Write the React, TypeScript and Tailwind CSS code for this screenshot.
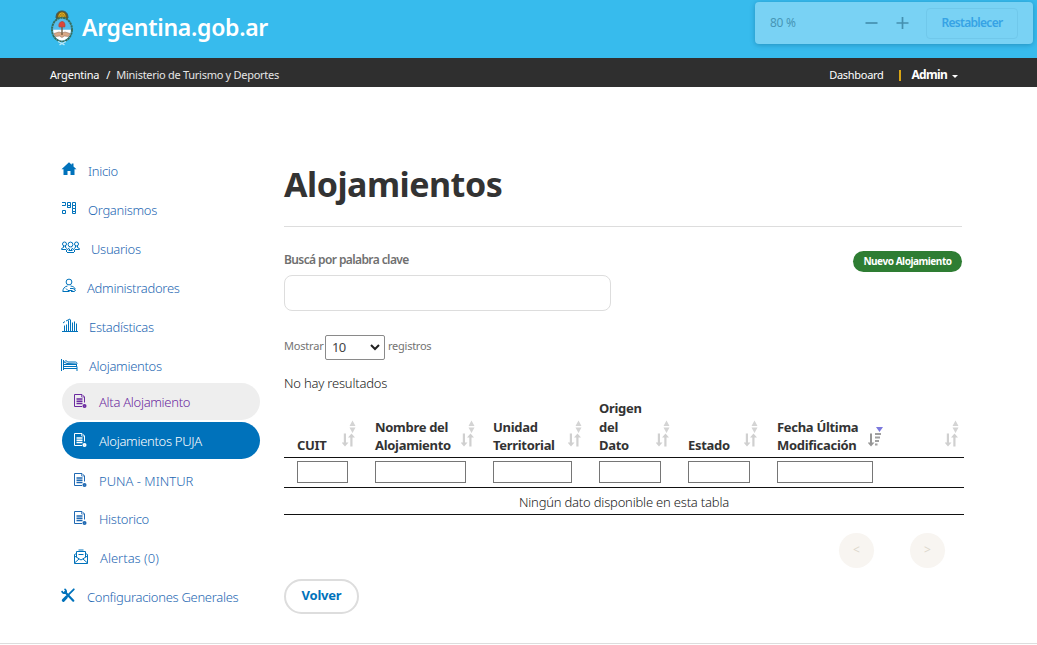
import type { ReactNode } from "react";

function Seal() {
  return (
    <svg width="24" height="36" viewBox="0 0 24 36" fill="none">
      <path d="M6 8C6 3 8.500 1 12 1s6 2 6 7l-2 1.500H8z" fill="#6b5a20" stroke="#3d5961" strokeWidth="1" />
      <path d="M8.500 7.500C8 4 10 2.500 12 2.500s4 1.500 3.500 5z" fill="#e8b323" />
      <path d="M9.500 7l1-3M12 7V3M14.500 7l-1-3" stroke="#806017" strokeWidth=".7" />
      <ellipse cx="12" cy="19.500" rx="10" ry="11.800" fill="#55bceb" stroke="#376d5c" strokeWidth="2" strokeDasharray="2.400 .5" />
      <path d="M3.200 19.800h17.600c0 6-3.800 10.600-8.800 10.600s-8.800-4.600-8.800-10.600z" fill="#fff" />
      <path d="M4 23.500l5-1.500 3 1 3-1 5 1.500-1.500 3-4-.5-2.500 1.500-2.500-1.500-4 .5z" fill="#d9a987" stroke="#987766" strokeWidth=".6" />
      <path d="M12 13v12" stroke="#6e5638" strokeWidth="1.300" />
      <path d="M9 17c-.8-3 .8-5.300 3-5.600 2.400-.1 3.600 2.600 2.800 5.600z" fill="#dc4639" stroke="#a4463c" strokeWidth=".6" />
      <path d="M8 31.500c2 1.200 5 2 6.500 3.500M16 31.500c-2 1.200-5 2-6.500 3.500" stroke="#b7e6f8" strokeWidth="1.300" />
    </svg>
  );
}

function HomeIcon() {
  return (
    <svg width="16" height="14" viewBox="0 0 16 14" fill="#0072bb">
      <path d="M8 .3L.5 7.300h2V13H6.500V9h3v4h4V7.300h2L12.500 4.500V1.500h-1.800v1.300z" />
    </svg>
  );
}

function BoardIcon() {
  return (
    <svg width="16" height="14" viewBox="0 0 16 14" fill="none" stroke="#0072bb">
      <path d="M1 1.500h3.500v3H1M6.500 1.500h3v3h-3zM11.500 1.500h3v3h-3zM6.500 6.500h3M11.500 4.500h3v3h-3zM11.500 10.500h3v2h-3zM1.500 9.500h3v3h-3zM6.500 4.500h3v2h-3z" />
      <path d="M11.500 7.500h3v3h-3z" />
    </svg>
  );
}

function UsersIcon() {
  return (
    <svg width="19" height="13" viewBox="0 0 19 13" fill="none" stroke="#0072bb">
      <circle cx="3.500" cy="3" r="2" />
      <circle cx="15.500" cy="3" r="2" />
      <circle cx="9.500" cy="3.500" r="2.400" />
      <path d="M2.500 4.500v2L.6 7.500v1H5M4.500 4.500v2l1.500 1M16.500 4.500v2l1.900 1v1H14M14.500 4.500v2l-1.500 1M5.500 11v-2l3-2M13.500 11v-2l-3-2M6 11.500h7M7.500 9.500h4M8 8l1.500 1.500L11 8" />
    </svg>
  );
}

function AdminIcon() {
  return (
    <svg width="15" height="16" viewBox="0 0 15 16" fill="none" stroke="#0072bb">
      <circle cx="7" cy="4" r="2.900" />
      <path d="M5.500 8C2.500 8.500 1 10.500.8 13.500h6.700M8.500 8c2.500.3 4.200 1.300 4.700 3M4 10.500l2 2h4.500M8 10.500h3l2.500 1.500-1 1.500H9" />
    </svg>
  );
}

function StatsIcon() {
  return (
    <svg width="16" height="15" viewBox="0 0 16 15" fill="none" stroke="#0072bb">
      <path d="M0 13.500h16M2.500 13V7.500M4.500 13V6.500M6.500 13V2.500M8.500 13V1.500M10.500 13V4.500M12.500 13V3.500M14.500 13V5.500M1 5l2-1.500M4 3l4-2" />
    </svg>
  );
}

function BedIcon() {
  return (
    <svg width="17" height="12" viewBox="0 0 17 12" fill="none" stroke="#0072bb">
      <path d="M.5 0v12M2.500 1v10M2.500 7.500h13.500V12M2.500 9.500H16M3 3l3 1.500L15.500 5v2M3.500 2.500c1-1 2.500-1 3 .5h8c1 0 1.500.8 1.500 2M3 5.500h12" />
    </svg>
  );
}

function DocIcon() {
  return (
    <svg width="14" height="16" viewBox="0 0 14 16" fill="none" stroke="currentColor">
      <path d="M11.500 9.500V4l-2.500-2.500H1.500v12h7.500" />
      <path d="M8.500 1.500V4h3" strokeWidth=".7" />
      <path d="M3.500 6h6M3.500 8.300h6M3.500 10.600h6" strokeWidth="1.500" />
      <circle cx="11.500" cy="13" r="1.200" strokeWidth="1.700" />
    </svg>
  );
}

function MailIcon() {
  return (
    <svg width="16" height="16" viewBox="0 0 16 16" fill="none" stroke="#0072bb">
      <path d="M1.500 5.500v9h13v-9M1.500 6l2-2M14.500 6l-2-2M3.500 8V2.500h9V8M5.500 1h5M5.500 5.500h5M1.500 7l6.500 4 6.500-4M1.500 14l4.500-4M14.500 14L10 10" />
    </svg>
  );
}

function ToolsIcon() {
  return (
    <svg width="15" height="15" viewBox="0 0 15 15" fill="none" stroke="#0072bb" strokeLinecap="round">
      <path d="M12.800 1.300l-7 7" strokeWidth="1.800" />
      <path d="M5.300 9.200l-3 3.200" strokeWidth="3" />
      <path d="M4 4l8.300 8.700" strokeWidth="2.200" />
      <path d="M1 2.800c.3 2 1.800 2.800 3.800 2.200C5.600 3.500 5 1.800 3.500 1" strokeWidth="1.800" strokeLinecap="butt" />
    </svg>
  );
}

function NavItem({ icon, iconClass, label, className }: { icon: ReactNode; iconClass: string; label: string; className: string }) {
  return (
    <a className={`flex items-center text-[13px] font-light whitespace-nowrap ${className}`}>
      <span className={`shrink-0 ${iconClass}`}>{icon}</span>
      <span>{label}</span>
    </a>
  );
}

function SortIcon({ desc, className }: { desc?: boolean; className: string }) {
  return (
    <svg className={`absolute bottom-[9px] ${className}`} width="15" height="28" viewBox="0 0 15 28">
      {desc ? (
        <>
          <path d="M8 7h7l-3.500 5z" fill="#7b78dd" />
          <path d="M2 13.500h2v9h2.500l-3.500 4-3.500-4H2z" fill="#969696" />
          <path d="M7 13h6v2H7zM7 16.500h5v2H7zM7 20h4v2H7zM7 23.500h2.500v2H7z" fill="#a0a0a0" />
        </>
      ) : (
        <>
          <path d="M7.500 6L10.500 .5l3 5.500zM7.500 7.500h6l-3 5.500z" fill="#d4d4d4" />
          <path d="M1.800 13.500h2.200v9h2.500l-3.500 4-3.500-4h2.300zM8.300 26.500h2.200v-9H13l-3.500-4-3.500 4h2.300z" fill="#d0d0d0" />
        </>
      )}
    </svg>
  );
}

const columns = [
  { lines: ["CUIT"], th: "w-[78px]", input: "w-[51px]", sort: "right-[5px]" },
  { lines: ["Nombre del", "Alojamiento"], th: "w-[118px]", input: "w-[91px]", sort: "right-[4px]" },
  { lines: ["Unidad", "Territorial"], th: "w-[106px]", input: "w-[79px]", sort: "right-[3px]" },
  { lines: ["Origen", "del", "Dato"], th: "w-[89px]", input: "w-[62px]", sort: "right-[4px]" },
  { lines: ["Estado"], th: "w-[89px]", input: "w-[62px]", sort: "right-[5px]" },
  { lines: ["Fecha Última", "Modificación"], th: "w-[124px]", input: "w-[96px]", sort: "right-[5px]", desc: true },
  { lines: [], th: "w-[76px]", input: "", sort: "right-[4px]" },
];

export default function App() {
  return (
    <div className="h-[645px] w-[1037px] overflow-hidden bg-white font-['Noto_Sans',sans-serif] text-[#333]">
      <header className="flex h-[58px] justify-between bg-[#37bbed]">
        <div className="flex items-start pl-[50px]">
          <div className="mt-[10px]"><Seal /></div>
          <span className="mt-[10px] ml-[8px] text-[23px] leading-[34px] font-semibold tracking-[-0.3px] text-white font-stretch-semi-condensed">Argentina.gob.ar</span>
        </div>
        <div className="mt-[2px] mr-[4px] flex h-[42px] w-[278px] items-center rounded-[4px] bg-[#79d2f4] pl-[15px] text-[12px] text-[#4796b6] shadow-[0_1px_5px_rgba(0,70,110,0.35)]">
          <span className="w-[95px] tracking-[-0.3px]">80 %</span>
          <svg width="13" height="14" viewBox="0 0 13 14" stroke="#4590af" strokeWidth="1.700"><path d="M.5 7h12" /></svg>
          <svg className="ml-[18px]" width="13" height="14" viewBox="0 0 13 14" stroke="#4590af" strokeWidth="1.700"><path d="M.5 7h12M6.500 1v12" /></svg>
          <span className="ml-[17px] flex h-[31px] w-[92px] items-center justify-center rounded-[4px] border border-[#70c8eb] text-[12px] font-semibold tracking-[-0.7px] text-[#36a3e5]">Restablecer</span>
        </div>
      </header>
      <div className="flex h-[29px] items-center bg-[#2f2f2f] pt-[5px] text-[11px] text-white">
        <span className="ml-[50px] tracking-[-0.2px]">Argentina</span>
        <span className="ml-[7px]">/</span>
        <span className="ml-[6px] tracking-[-0.28px] text-[#e5e5e5]">Ministerio de Turismo y Deportes</span>
        <div className="mr-[79px] ml-auto flex items-center">
          <span className="tracking-[-0.3px]">Dashboard</span>
          <span className="ml-[15px] h-[11px] w-[2px] bg-[#d9a514]" />
          <span className="ml-[11px] text-[12px] font-bold tracking-[-0.7px]">Admin</span>
          <svg className="mt-[3px] ml-[5px]" width="6" height="4" viewBox="0 0 6 4" fill="#fff"><path d="M0 0h6L3 3z" /></svg>
        </div>
      </div>

      <main className="flex h-[556px]">
        <nav className="ml-[62px] flex w-[198px] shrink-0 flex-col pt-[65px] tracking-[-0.3px] text-[#1f69b3]">
          <NavItem icon={<HomeIcon />} iconClass="-ml-px mb-[5px] w-[27px]" label="Inicio" className="h-[39px]" />
          <NavItem icon={<BoardIcon />} iconClass="-ml-px mb-[5px] w-[27px]" label="Organismos" className="h-[39px]" />
          <NavItem icon={<UsersIcon />} iconClass="-ml-px mb-[5px] w-[30px]" label="Usuarios" className="h-[39px]" />
          <NavItem icon={<AdminIcon />} iconClass="mb-[5px] w-[25px]" label="Administradores" className="h-[39px]" />
          <NavItem icon={<StatsIcon />} iconClass="mb-[5px] w-[27px]" label="Estadísticas" className="h-[39px]" />
          <NavItem icon={<BedIcon />} iconClass="-ml-px mb-[3px] w-[28px]" label="Alojamientos" className="h-[36px] pt-[3px]" />
          <NavItem icon={<DocIcon />} iconClass="mb-[5px] w-[26px]" label="Alta Alojamiento" className="h-[37px] rounded-full bg-[#eee] pt-[3px] pl-[11px] text-[#6b2aa0]" />
          <NavItem icon={<DocIcon />} iconClass="mb-[5px] w-[26px]" label="Alojamientos PUJA" className="mt-[2px] h-[37px] rounded-full bg-[#0072bb] pt-[3px] pl-[11px] text-white" />
          <NavItem icon={<DocIcon />} iconClass="mb-[5px] w-[26px]" label="PUNA - MINTUR" className="mt-[3px] h-[38px] pt-[2px] pl-[11px] tracking-normal" />
          <NavItem icon={<DocIcon />} iconClass="mb-[5px] w-[26px]" label="Historico" className="h-[38px] pt-[2px] pl-[11px]" />
          <NavItem icon={<MailIcon />} iconClass="mb-[5px] w-[27px]" label="Alertas (0)" className="mt-[1px] h-[38px] pt-[2px] pl-[11px] tracking-normal" />
          <NavItem icon={<ToolsIcon />} iconClass="-ml-px mb-[5px] w-[26px]" label="Configuraciones Generales" className="mt-[1px] h-[38px] pt-[2px]" />
        </nav>

        <section className="ml-[24px] w-[680px]">
          <div className="mr-[2px] h-[140px] border-b border-[#ddd] pt-[74px]">
            <h1 className="text-[34px] leading-[46px] font-bold tracking-[-0.5px] font-stretch-semi-condensed">Alojamientos</h1>
          </div>
          <div className="mr-[2px] flex justify-between">
            <div className="pt-[24px]">
              <label className="block h-[24px] text-[12px] leading-[18px] font-semibold tracking-[-0.6px] text-[#6f6f6f]">Buscá por palabra clave</label>
              <input className="block h-[36px] w-[327px] rounded-[8px] border border-[#ddd]" />
            </div>
            <button className="mt-[24px] flex h-[21px] w-[109px] items-center justify-center rounded-full bg-[#2e7d33] text-[10px] font-bold tracking-[-0.45px] whitespace-nowrap text-white">Nuevo Alojamiento</button>
          </div>
          <div className="mt-[23px] flex h-[26px] items-center text-[11px] text-[#737373]">
            <span className="w-[41px] pb-[2px] tracking-[-0.2px]">Mostrar</span>
            <span className="flex h-[25px] w-[60px] items-center justify-between rounded-[2px] border border-[#8a8a8a] pr-[4px] pl-[6px] text-[13px] text-[#444]">
              <span className="pt-[2px] tracking-[-0.8px]">10</span>
              <svg width="10" height="7" viewBox="0 0 10 7" fill="none" stroke="#222" strokeWidth="2"><path d="M1 1l4 4 4-4" /></svg>
            </span>
            <span className="ml-[3px] pb-[2px] tracking-[-0.25px]">registros</span>
          </div>
          <p className="mt-[13px] h-[26px] text-[13px] leading-[20px] font-light tracking-[-0.2px] text-[#222]">No hay resultados</p>
          <table className="w-[680px] table-fixed border-collapse">
            <thead>
              <tr className="h-[57px] border-b-[1px] border-[#111]">
                {columns.map((c, i) => (
                  <th key={i} className={`relative p-0 pb-[2px] pl-[13px] text-left align-bottom text-[13px] leading-[18.5px] font-bold tracking-[-0.3px] whitespace-nowrap ${c.th}`}>
                    {c.lines.map((l) => <span key={l} className="block">{l}</span>)}
                    <SortIcon desc={c.desc} className={c.sort} />
                  </th>
                ))}
              </tr>
            </thead>
            <tbody>
              <tr className="h-[30px] border-b border-[#111]">
                {columns.map((c, i) => (
                  <td key={i} className="p-0 pl-[13px]">
                    {c.input && <input className={`block h-[22px] border border-[#767676] ${c.input}`} />}
                  </td>
                ))}
              </tr>
              <tr className="h-[27px] border-b border-[#111]">
                <td colSpan={7} className="p-0 pt-[2px] text-center text-[13px] leading-[20px] font-light tracking-[-0.2px] text-[#222]">Ningún dato disponible en esta tabla</td>
              </tr>
            </tbody>
          </table>
          <div className="mt-[18px] mr-[19px] flex justify-end gap-[36px] text-[12px] text-[#ddd8cd]">
            <span className="flex size-[35px] items-center justify-center rounded-full bg-[#f8f5f1]">&lt;</span>
            <span className="flex size-[35px] items-center justify-center rounded-full bg-[#f8f5f1]">&gt;</span>
          </div>
          <button className="mt-[11px] flex h-[35px] w-[75px] items-center justify-center rounded-full border-2 border-[#ddd] text-[13px] font-bold tracking-[-0.2px] text-[#0072bb]">Volver</button>
        </section>
      </main>
      <div className="h-px bg-[#ddd]" />
    </div>
  );
}
